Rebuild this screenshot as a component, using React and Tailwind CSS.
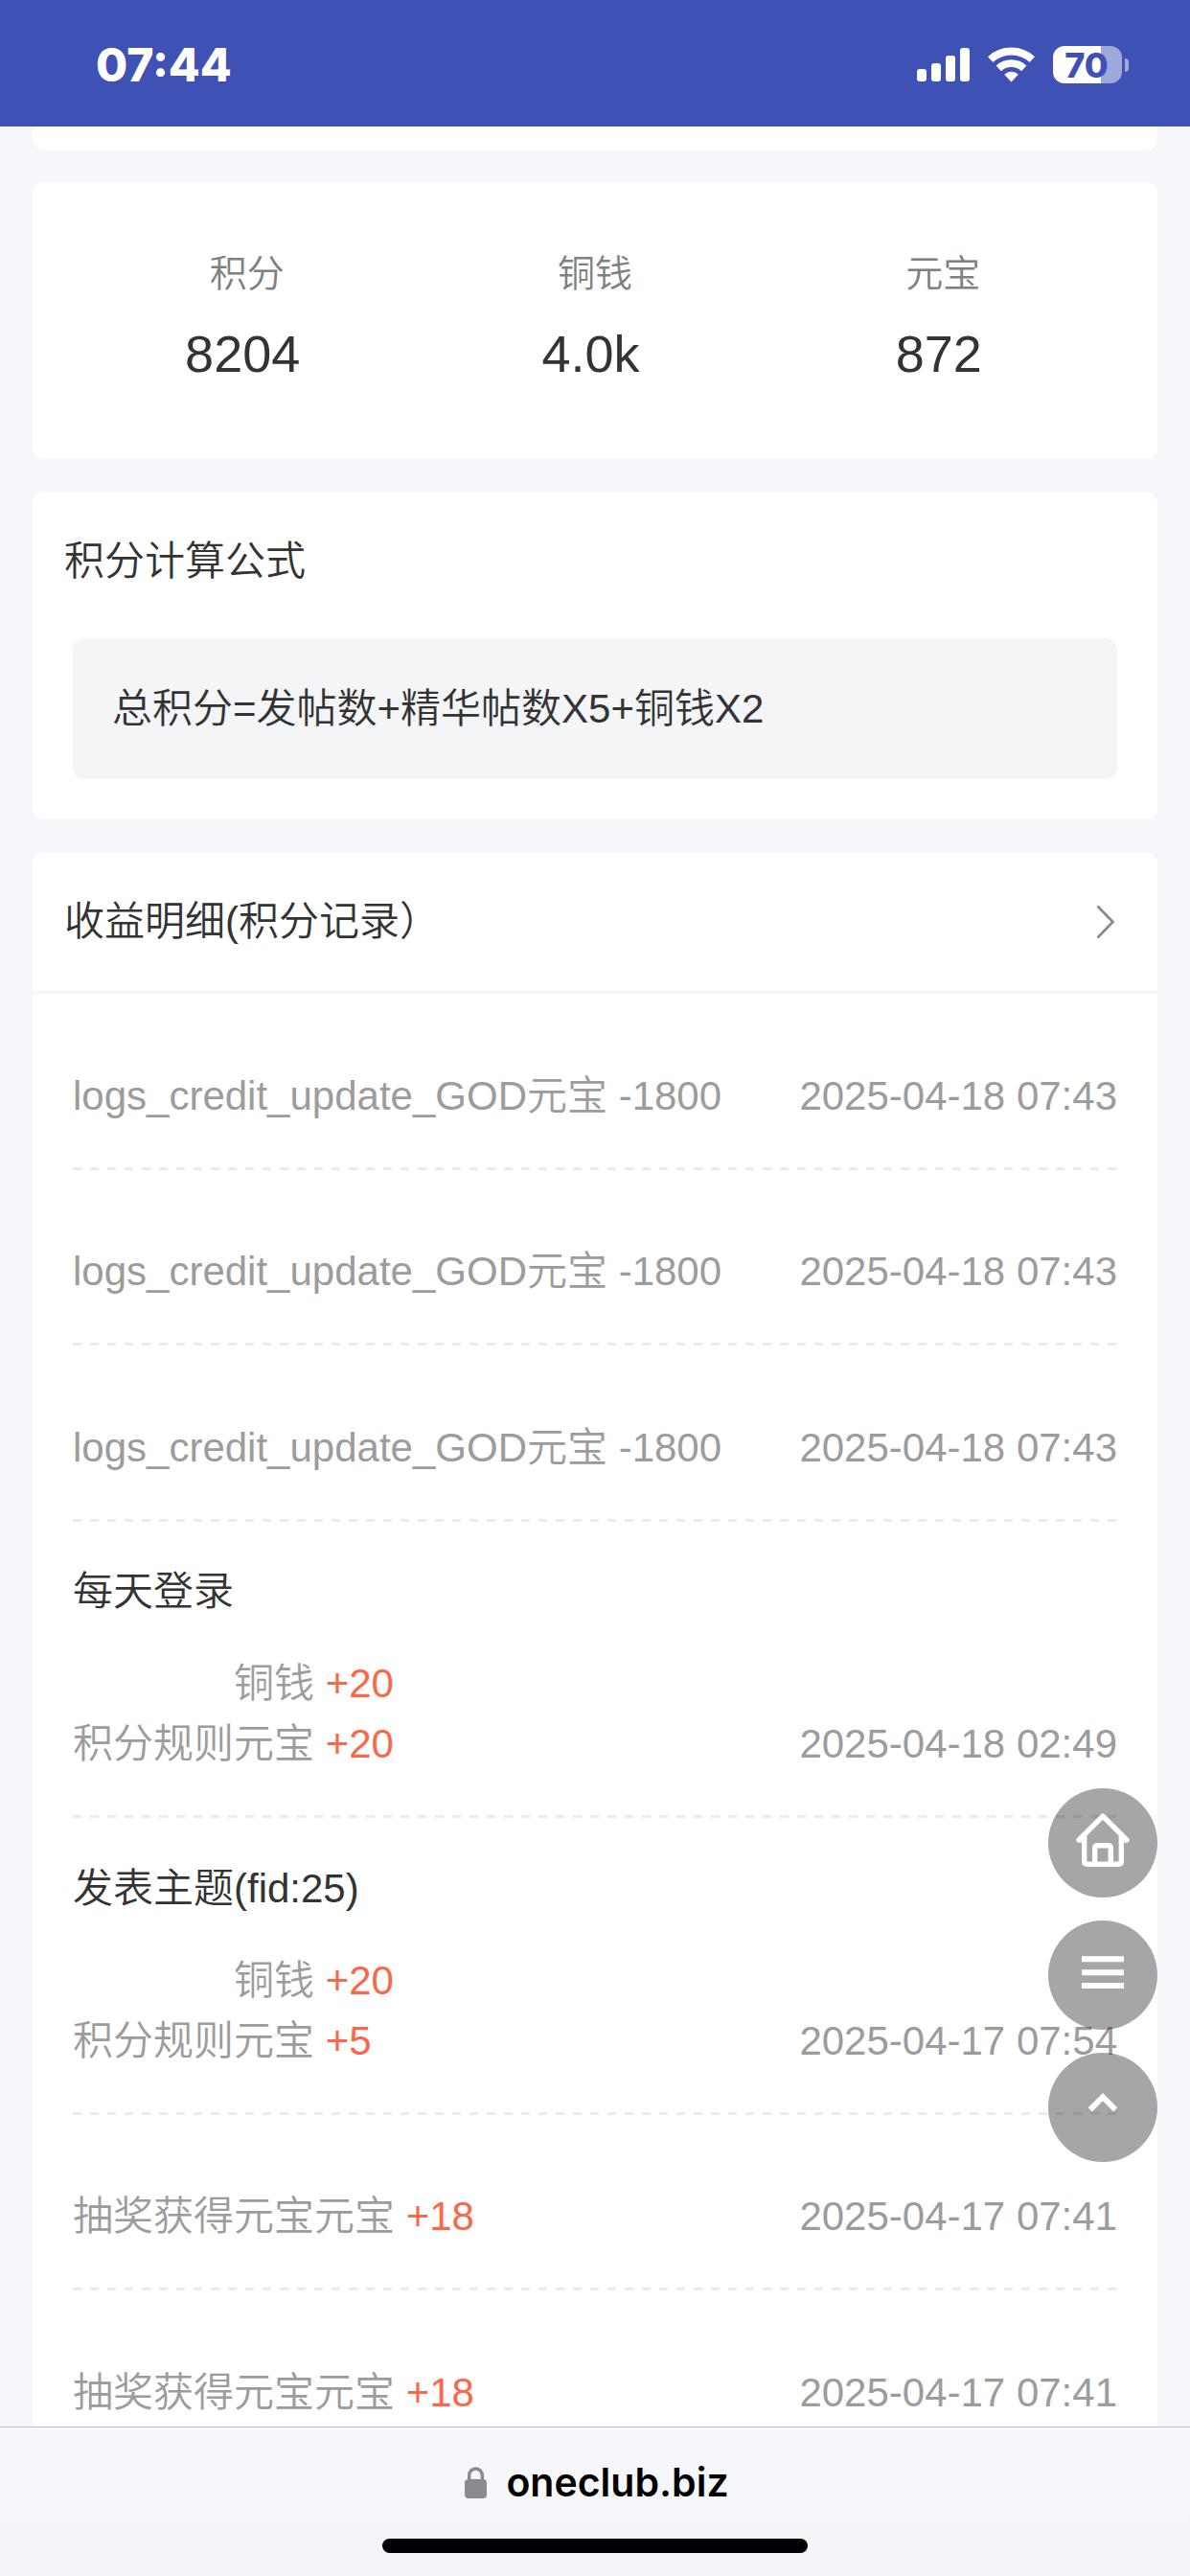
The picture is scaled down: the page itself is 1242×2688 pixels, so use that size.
const stats = [
  { label: "积分", value: "8204" },
  { label: "铜钱", value: "4.0k" },
  { label: "元宝", value: "872" },
];

const records = [
  { id: 1, credits: [{ name: "logs_credit_update_GOD元宝", value: "-1800" }], time: "2025-04-18 07:43" },
  { id: 2, credits: [{ name: "logs_credit_update_GOD元宝", value: "-1800" }], time: "2025-04-18 07:43" },
  { id: 3, credits: [{ name: "logs_credit_update_GOD元宝", value: "-1800" }], time: "2025-04-18 07:43" },
  {
    id: 4,
    title: "每天登录",
    rule: "积分规则",
    credits: [{ name: "铜钱", value: "+20" }, { name: "元宝", value: "+20" }],
    time: "2025-04-18 02:49",
  },
  {
    id: 5,
    title: "发表主题(fid:25)",
    rule: "积分规则",
    credits: [{ name: "铜钱", value: "+20" }, { name: "元宝", value: "+5" }],
    time: "2025-04-17 07:54",
  },
  { id: 6, rule: "抽奖获得元宝", credits: [{ name: "元宝", value: "+18" }], time: "2025-04-17 07:41" },
  { id: 7, rule: "抽奖获得元宝", credits: [{ name: "元宝", value: "+18" }], time: "2025-04-17 07:41" },
];

function StatusBar() {
  return (
    <header className="flex h-[132px] shrink-0 items-center justify-between bg-[#3f51b5] pl-[100px] pr-16 pt-[3px] text-white">
      <span className="font-['Inter',sans-serif] text-[48px] font-extrabold leading-none">07:44</span>

      <div className="flex items-center">
        {/* Signal */}
        <svg width="55" height="35" viewBox="0 0 55 35" fill="currentColor">
          <rect x="0" y="22" width="10" height="13" rx="3" />
          <rect x="15" y="16" width="10" height="19" rx="3" />
          <rect x="30" y="8" width="10" height="27" rx="3" />
          <rect x="45" y="0" width="10" height="35" rx="3" />
        </svg>

        {/* Wifi */}
        <svg className="ml-[19px]" width="49" height="37" viewBox="0 0 49 37" fill="none" stroke="currentColor">
          <path d="M2.7 13.1A32 32 0 0 1 46.3 13.1" strokeWidth="8" />
          <path d="M11.3 22.3A19.4 19.4 0 0 1 37.7 22.3" strokeWidth="7.8" />
          <path d="M17.2 28.7A10.7 10.7 0 0 1 31.8 28.7L24.5 36.5Z" fill="currentColor" stroke="none" />
        </svg>

        {/* Battery */}
        <div className="ml-[19px] flex items-center">
          <div className="flex h-[39px] w-[72px] items-center justify-center rounded-[12px] bg-linear-to-r from-white from-[50px] to-[#9fa8da] to-[50px] pr-0.5 font-['Inter',sans-serif] text-[36px] font-extrabold leading-none text-[#3f51b5]">
            70
          </div>
          <div className="ml-[3px] h-[14px] w-1 rounded-r-full bg-[#9fa8da]" />
        </div>
      </div>
    </header>
  );
}

function RecordRow({ record }) {
  return (
    <li className="shrink-0 pt-[41.5px]">
      {record.title && <p className="text-[#333]">{record.title}</p>}
      <div className="mt-[33px] flex items-end justify-between pb-[43px] text-[#9c9c9c]">
        <div className="flex items-end">
          {record.rule && <span>{record.rule}</span>}
          <div>
            {record.credits.map((credit) => (
              <p key={credit.name}>
                {credit.name}{" "}
                <span className={credit.value.startsWith("+") ? "text-[#f7694a]" : ""}>{credit.value}</span>
              </p>
            ))}
          </div>
        </div>
        <time>{record.time}</time>
      </div>
      <div className="h-[3px] bg-[repeating-linear-gradient(to_right,#ebebeb_0_9px,transparent_9px_18px)]" />
    </li>
  );
}

function FloatingButtons() {
  return (
    <div className="absolute right-[34px] top-[1866px] flex flex-col gap-6 text-white">
      <button className="size-[114px] rounded-full bg-black/35" aria-label="首页">
        <svg viewBox="0 0 114 114" fill="none" stroke="currentColor" strokeWidth="5.4" strokeLinejoin="round">
          <path d="M32 54L57 29.2L82 54" strokeLinecap="round" />
          <path d="M32 54H39M75 54H82" strokeLinecap="butt" />
          <path d="M37.7 50V76.2Q37.7 79.2 40.7 79.2H73.3Q76.3 79.2 76.3 76.2V50" />
          <path d="M48.7 79V62.5Q48.7 59.7 51.5 59.7H62.5Q65.3 59.7 65.3 62.5V79" />
        </svg>
      </button>
      <button className="size-[114px] rounded-full bg-black/35" aria-label="菜单">
        <svg viewBox="0 0 114 114" stroke="currentColor" strokeWidth="6">
          <path d="M35 40.3H79M35 54.2H79M35 68H79" />
        </svg>
      </button>
      <button className="size-[114px] rounded-full bg-black/35" aria-label="返回顶部">
        <svg viewBox="0 0 114 114" fill="none" stroke="currentColor" strokeWidth="5.8">
          <path d="M43.8 59.4L57 46.2L70.2 59.4" />
        </svg>
      </button>
    </div>
  );
}

function BrowserBar() {
  return (
    <footer className="flex h-[156px] shrink-0 flex-col items-center border-t border-[#bfc0c3] bg-linear-to-b from-[#f7f8fb] to-[#f3f4f7]">
      <div className="mt-8 flex h-[50px] items-center pl-1">
        <svg className="mt-[1px]" width="23" height="33" viewBox="0 0 23 33">
          <rect x="0" y="13" width="23" height="20" rx="4" fill="#8a8a8f" />
          <path d="M4.7 14V9a6.8 7 0 0 1 13.6 0V14" fill="none" stroke="#8a8a8f" strokeWidth="3.4" />
        </svg>
        <span className="ml-[20px] font-['Inter',sans-serif] text-[41px] font-semibold leading-[50px] text-black">
          oneclub.biz
        </span>
      </div>
      <div className="mt-[34px] h-[15px] w-[444px] rounded-full bg-black" />
    </footer>
  );
}

function App() {
  return (
    <div className="relative flex h-[2688px] w-[1242px] flex-col overflow-hidden bg-[#f5f7fb] font-['Liberation_Sans','Noto_Sans_CJK_SC',sans-serif] text-[42px] font-[350] leading-[63px] text-[#333]">
      <StatusBar />

      <main className="flex min-h-0 flex-1 flex-col overflow-hidden px-[34px]">
        <div className="h-[25px] shrink-0 rounded-b-xl bg-white" />

        {/* Totals */}
        <section className="mt-[33px] grid h-[289px] shrink-0 grid-cols-3 rounded-xl bg-white px-[42px] pt-[64px] text-center">
          {stats.map((stat) => (
            <div key={stat.label}>
              <p className="text-[39px] leading-[64px] text-[#808080]">{stat.label}</p>
              <p className="mt-3 pr-[9px] text-[54px] leading-[78px]">{stat.value}</p>
            </div>
          ))}
        </section>

        {/* Formula */}
        <section className="mt-[34px] h-[342px] shrink-0 rounded-xl bg-white px-[42px] pt-[41px]">
          <h2 className="-ml-[9px] font-[350]">积分计算公式</h2>
          <div className="mt-[49px] flex h-[147px] items-center rounded-xl bg-[#f3f5f7] px-[41px]">
            总积分=发帖数+精华帖数X5+铜钱X2
          </div>
        </section>

        {/* Credit records */}
        <section className="mt-[34px] flex shrink-0 flex-col rounded-t-xl bg-white">
          <div className="flex h-[148px] shrink-0 items-center justify-between border-b-[3px] border-[#f4f5f5] pl-[33px] pr-[44px]">
            <h2 className="font-[350]">收益明细(积分记录）</h2>
            <svg width="20" height="36" viewBox="0 0 20 36" fill="none" stroke="#888" strokeWidth="2.6">
              <path d="M1.5 1.5L17.5 18L1.5 34.5" />
            </svg>
          </div>
          <ul className="px-[42px]">
            {records.map((record) => (
              <RecordRow key={record.id} record={record} />
            ))}
          </ul>
        </section>
      </main>

      <BrowserBar />
      <FloatingButtons />
    </div>
  );
}

export default App;
